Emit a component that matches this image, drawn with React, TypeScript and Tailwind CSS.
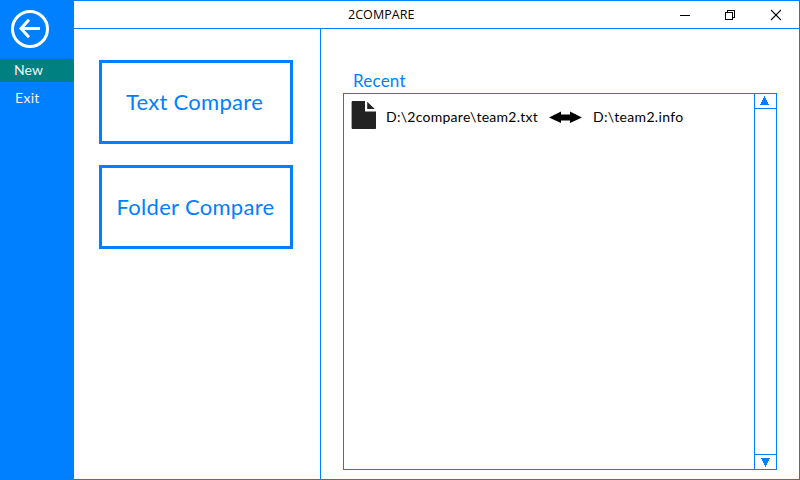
import React from "react";

type RecentEntry = { left: string; right: string };

const recent: RecentEntry[] = [{ left: "D:\\2compare\\team2.txt", right: "D:\\team2.info" }];

function BackIcon() {
  return (
    <svg width="38" height="38" viewBox="0 0 38 38" fill="none" stroke="#fff">
      <circle cx="19" cy="19" r="17.5" strokeWidth="3" />
      <path d="M29 18.5H10.5M18 9.8l-8 8.7 8 8.7" strokeWidth="3" />
    </svg>
  );
}

function Sidebar() {
  return (
    <nav className="flex w-[74px] shrink-0 flex-col bg-[#0080ff] font-['Lato','Liberation_Sans',sans-serif] text-[14px] text-[#f4f4f4]">
      <button className="flex h-[59px] items-start pt-[10px] pl-[11px]" aria-label="Back">
        <BackIcon />
      </button>
      <button className="flex h-[23px] items-center bg-[#008080] pb-[2px] pl-[14px] tracking-[0.1px]">New</button>
      <button className="mt-[4px] flex h-[23px] items-center pl-[15px] tracking-[0.3px]">Exit</button>
    </nav>
  );
}

function TitleBar() {
  return (
    <header className="flex h-[29px] shrink-0 items-center border-y border-[#0080ff] pr-[18px]">
      <h1 className="pl-[274px] font-['Open_Sans',sans-serif] text-[12.5px] leading-[18px] tracking-[0.05px] text-black">2COMPARE</h1>
      <svg className="ml-auto" width="101" height="12" viewBox="0 0 101 12" fill="none" stroke="#000" shapeRendering="crispEdges">
        <path d="M0 6.5h10" />
        <path d="M45.5 3.5h7v7h-7zM47.5 3V1.5h7v7H53" />
        <path d="M91 1l10 10M101 1L91 11" shapeRendering="auto" strokeWidth="1.1" />
      </svg>
    </header>
  );
}

function FileIcon() {
  return (
    <svg width="25" height="28" viewBox="0 0 25 28" fill="#222">
      <path d="M1.3 0H14v10.5h11V27.5L24.5 28H1.3L0.6 27.3V0.7z" />
      <path d="M16.2 0.8v7.2h7.6z" />
    </svg>
  );
}

function ScrollBar() {
  return (
    <div className="flex w-[22px] flex-col justify-between border-l border-[#0080ff]">
      <button className="flex h-[15px] justify-center border-b border-[#0080ff] pt-[2px] pr-[2px]" aria-label="Scroll up">
        <svg width="9" height="9" viewBox="0 0 9 9" fill="#0080ff" shapeRendering="crispEdges"><path d="M4 0h1v2h1v2h1v2h1v2h1v1H0V8h1V6h1V4h1V2h1z" /></svg>
      </button>
      <button className="flex h-[15px] justify-center border-t border-[#0080ff] pt-[3px]" aria-label="Scroll down">
        <svg width="9" height="9" viewBox="0 0 9 9" fill="#0080ff" shapeRendering="crispEdges"><path d="M0 0h9v1H8v2H7v2H6v2H5v2H4V7H3V5H2V3H1V1H0z" /></svg>
      </button>
    </div>
  );
}

export default function App() {
  return (
    <div className="flex h-[480px] w-[800px] overflow-hidden bg-white">
      <Sidebar />
      <div className="flex flex-1 flex-col border-r border-b border-[#0080ff] font-['Lato','Liberation_Sans',sans-serif]">
        <TitleBar />
        <main className="flex flex-1">
          <section className="flex w-[247px] flex-col gap-[21px] border-r border-[#0080ff] pt-[31px] pl-[25px] text-[22px] text-[#0080ff]">
            <button className="flex h-[84px] w-[194px] items-center justify-center border-3 border-[#0080ff] pr-[3px] pb-[2px] tracking-[0.28px]">Text Compare</button>
            <button className="flex h-[84px] w-[194px] items-center justify-center border-3 border-[#0080ff] pr-[1px] pb-[2px] tracking-[0.3px]">Folder Compare</button>
          </section>
          <section className="flex flex-col pt-[42px] pl-[22px]">
            <h2 className="h-[22px] pl-[10px] text-[17px] leading-[20px] tracking-[0.2px] text-[#0080ff]">Recent</h2>
            <div className="flex h-[377px] w-[434px] border border-[#0080ff]">
              <ul className="flex-1 pt-[7px] pl-[7px]">
                {recent.map((r) => (
                  <li key={r.left} className="flex h-[28px] items-start text-[14px] leading-[19px] text-black">
                    <FileIcon />
                    <span className="w-[163px] pt-[6px] pl-[10px] tracking-[0.27px] whitespace-nowrap">{r.left}</span>
                    <svg className="mt-[10px] ml-[10px]" width="33" height="12" viewBox="0 0 33 12"><path d="M0 6.5L12 0.5V4h9V0.5L33 6.5 21 12V9h-9v3z" /><path d="M11 3.5h11v6H11z" /></svg>
                    <span className="pt-[6px] pl-[11px] tracking-[0.33px] whitespace-nowrap">{r.right}</span>
                  </li>
                ))}
              </ul>
              <ScrollBar />
            </div>
          </section>
        </main>
      </div>
    </div>
  );
}
